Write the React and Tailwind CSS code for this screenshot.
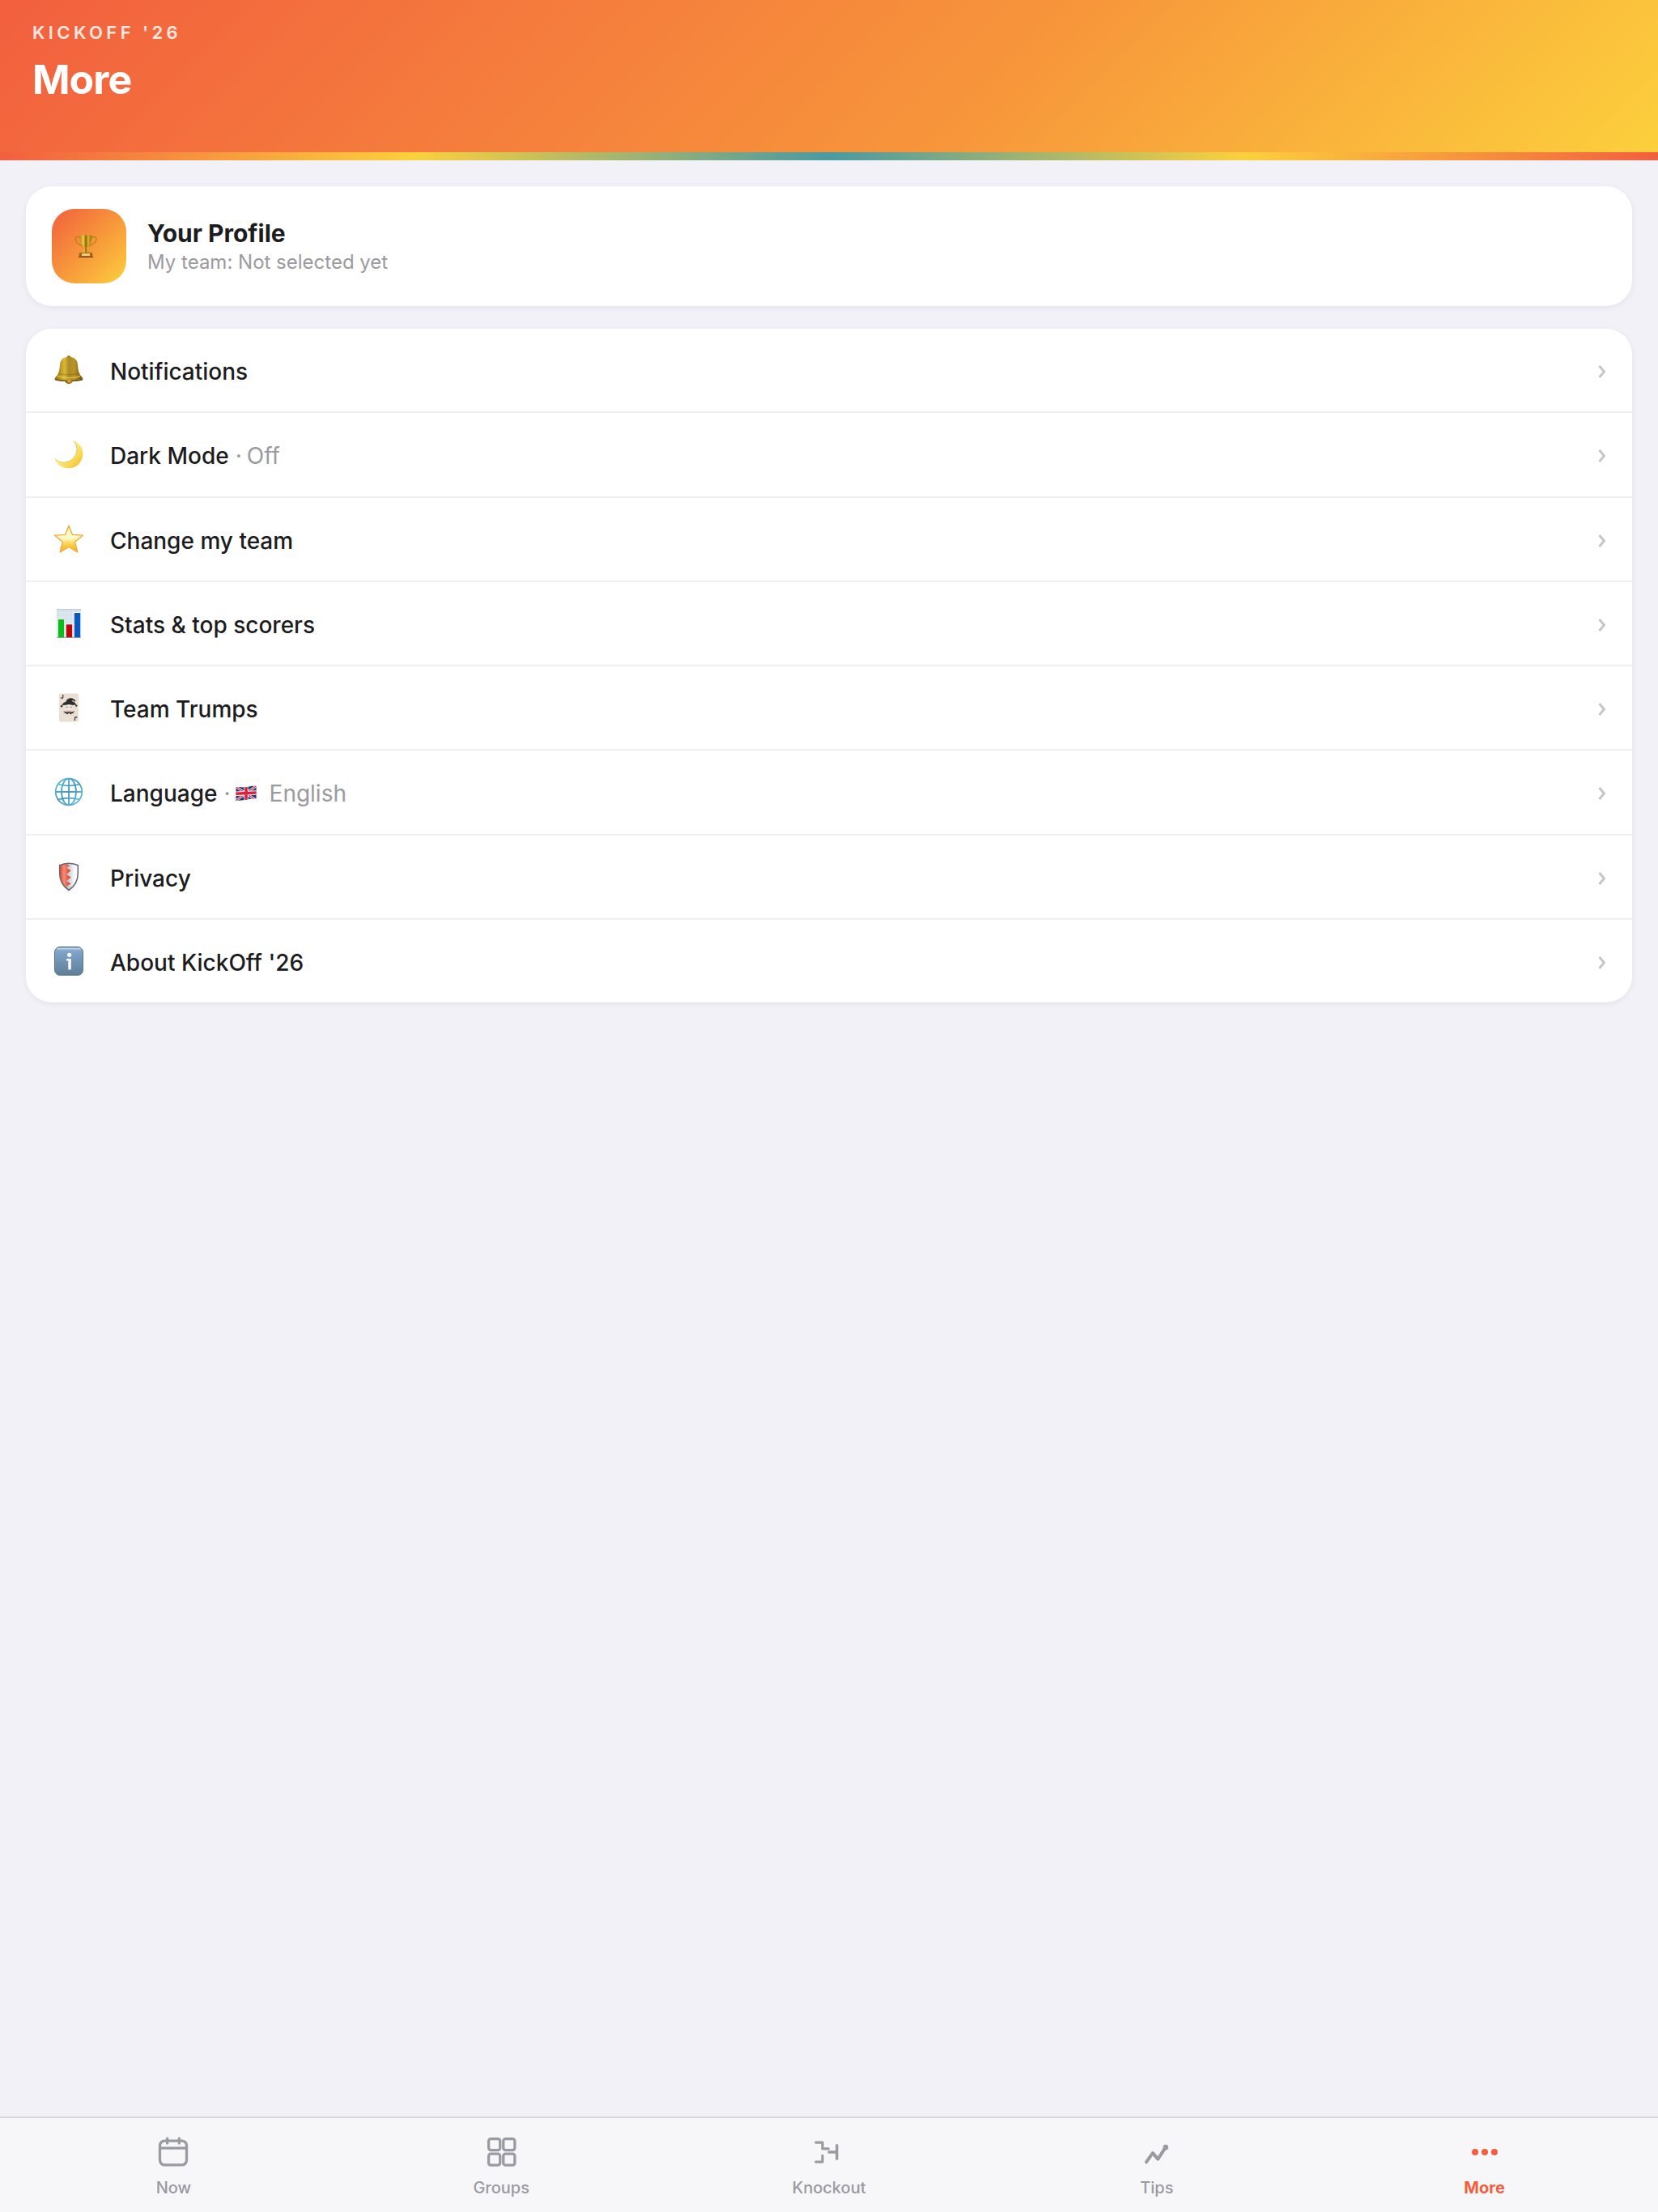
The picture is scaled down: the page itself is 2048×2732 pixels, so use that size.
import React from 'react';

const BellIcon = () => (
    <svg viewBox="0 0 36 36" className="size-9">
        <defs>
            <linearGradient id="bell" x1="0" y1="0" x2="1" y2="0">
                <stop offset="0" stopColor="#8a6a10" />
                <stop offset="0.35" stopColor="#d8b936" />
                <stop offset="0.5" stopColor="#ad8a26" />
                <stop offset="0.7" stopColor="#b8942a" />
                <stop offset="1" stopColor="#6b5012" />
            </linearGradient>
        </defs>
        <ellipse cx="18" cy="31.5" rx="4.6" ry="3.6" fill="#8a5a16" />
        <circle cx="18" cy="2.6" r="2.4" fill="#8f7018" />
        <path d="M18 1.800c-7 0-10.500 3.500-11 9.800-.4 6-1.300 9.500-3 12.500-1.500 2-3.300 3.500-3.500 5.400 4 1.800 10 2.300 17.500 2.300s13.500-.5 17.500-2.300c-.2-1.900-2-3.400-3.500-5.400-1.700-3-2.600-6.500-3-12.500-.5-6.300-4-9.800-11-9.800z" fill="url(#bell)" />
        <path d="M4 25.500c8 3 20 3 28 0" fill="none" stroke="#f0cf3a" strokeWidth="1.600" opacity="0.700" />
        <path d="M5.500 22c7 2.500 18 2.500 25 0" fill="none" stroke="#8a6612" strokeWidth="1" opacity="0.600" />
        <path d="M1 29.800c9 2 25 2 34 0" fill="none" stroke="#60430c" strokeWidth="1.200" />
        <ellipse cx="18.500" cy="31.600" rx="2.800" ry="2.200" fill="#d39a35" />
    </svg>
);

const MoonIcon = () => (
    <svg viewBox="0 0 36 36" className="size-9">
        <defs>
            <linearGradient id="moon" x1="0" y1="0" x2="1" y2="1">
                <stop offset="0.400" stopColor="#fdea92" />
                <stop offset="0.700" stopColor="#fbd850" />
                <stop offset="1" stopColor="#e9b53a" />
            </linearGradient>
        </defs>
        <path d="M23 .8C31 3.500 35.500 10.500 35.300 18 35 28 27.500 35.300 18 35.300 9.500 35.300 2.800 30.500.7 23.500c4 3.700 8.500 5 13.300 4.300C22.500 26.500 28 20 28 12c0-4.300-1.700-8-5-11.200z" fill="url(#moon)" />
        <path d="M1.200 24c4 3.700 8.500 4.800 12.800 4C22.500 26.500 28 20 28 12c0-4-1.500-7.500-4.200-10.500" fill="none" stroke="#e3b23c" strokeWidth="0.700" />
    </svg>
);

const StarIcon = () => (
    <svg viewBox="0 0 36 36" className="size-9">
        <defs>
            <linearGradient id="star" x1="0" y1="0" x2="0" y2="1">
                <stop offset="0" stopColor="#fff3b0" />
                <stop offset="0.450" stopColor="#fffbd0" />
                <stop offset="0.700" stopColor="#fdd24a" />
                <stop offset="1" stopColor="#f8a91c" />
            </linearGradient>
        </defs>
        <path d="M18 1.200l4.500 11.200 12.800.8-9.800 8.200 3.400 12.600L18 27.500 7.100 34l3.400-12.600L.7 13.200l12.800-.8z" fill="url(#star)" stroke="#efa93a" strokeWidth="1.300" strokeLinejoin="round" />
    </svg>
);

const ChartIcon = () => (
    <svg viewBox="0 0 36 36" className="size-9">
        <rect x="3" y="0" width="30" height="36" fill="#d5e1eb" />
        <path d="M3 5h30M3 10h30M3 15h30M3 20h30M3 25h30M8 0v36M13 0v36M18 0v36M23 0v36M28 0v36" stroke="#e6eef5" strokeWidth="0.700" />
        <rect x="3" y="0" width="30" height="1.200" fill="#c0ccd6" />
        <path d="M4 12h9v24H4zM14 18h9v18h-9zM24 4h8.500v32H24z" fill="#fff" />
        <rect x="4.800" y="13" width="7.400" height="22.500" fill="#0cbc1a" />
        <rect x="14.800" y="19.300" width="7.400" height="16.200" fill="#be0509" />
        <rect x="24.800" y="5" width="7.400" height="30.500" fill="#0a58c4" />
        <rect x="3" y="35.200" width="30" height="0.800" fill="#8494ad" />
    </svg>
);

const JokerIcon = () => (
    <svg viewBox="0 0 36 36" className="size-9">
        <rect x="6" y="0.600" width="24" height="35" rx="1.800" fill="#e9dfd3" />
        <path d="M10.800 2v3.200c0 1.500-2.300 1.500-2.500.2" fill="none" stroke="#3b3533" strokeWidth="1.200" />
        <path d="M25.500 34v-3.200c0-1.500 2.300-1.500 2.500-.2" fill="none" stroke="#3b3533" strokeWidth="1.200" />
        <path d="M12.500 14.500l1.500 6.500c1.500 2.500 6.500 2.500 8 0l1.500-6.500z" fill="#f0e6dc" />
        <path d="M9.300 16.300c.2-3 2.200-4.600 5.200-5.500C15 7.500 18 6 21.300 6.300c2.500.3 4 1.700 3.800 3.200-1.300-.8-2.600-.7-3.600.4 3 .6 5.300 2.300 5.700 5.400-1.700-1-3.400-1-5-.3-2.600-1.300-5.600-1.300-8.400 0-1.500-.5-3-.1-4.500 1.300z" fill="#2d2d30" />
        <circle cx="9" cy="16.300" r="1.200" fill="#2d2d30" />
        <circle cx="27.300" cy="15.600" r="1.200" fill="#2d2d30" />
        <circle cx="25" cy="9.400" r="1.100" fill="#2d2d30" />
        <path d="M14.500 17.300h2.500M19.500 17.300h2.500" stroke="#7d8796" strokeWidth="1" />
        <path d="M15.200 20.800c1.800 1.800 4.200 1.800 6 0l-.8 2.800h-4.400z" fill="#e98a7c" />
        <path d="M11 22l4.500 1.500h5.500l4.500-1.500-2.500 2 2 .8-3.500.2-.5 1.500-2.700-1.800-2.700 1.800-.5-1.500-3.600-.2 2-.8z" fill="#2d2d30" />
    </svg>
);

const GlobeIcon = () => (
    <svg viewBox="0 0 36 36" className="size-9">
        <defs>
            <linearGradient id="globe" gradientUnits="userSpaceOnUse" x1="0" y1="0" x2="36" y2="36">
                <stop offset="0" stopColor="#62c4e0" />
                <stop offset="0.500" stopColor="#4298c3" />
                <stop offset="1" stopColor="#6ccbe8" />
            </linearGradient>
        </defs>
        <g fill="none" stroke="url(#globe)" strokeWidth="1.800">
            <circle cx="18" cy="18" r="16.300" />
            <ellipse cx="18" cy="18" rx="9" ry="16.300" />
            <path d="M18 1.600v32.800M1.600 18h32.800" />
            <path d="M4.500 8.500c8 2.300 19 2.300 27 0M4.500 27.500c8-2.300 19-2.300 27 0" />
        </g>
    </svg>
);

const ShieldIcon = () => (
    <svg viewBox="0 0 36 36" className="size-9">
        <defs>
            <linearGradient id="shield-red" x1="0" y1="0" x2="1" y2="0">
                <stop offset="0" stopColor="#e2452f" />
                <stop offset="0.400" stopColor="#fb8a77" />
                <stop offset="1" stopColor="#cc3a21" />
            </linearGradient>
            <linearGradient id="shield-white" x1="0" y1="0" x2="1" y2="0">
                <stop offset="0" stopColor="#9a9ea5" />
                <stop offset="0.500" stopColor="#c9ced5" />
                <stop offset="0.750" stopColor="#f1f4f9" />
                <stop offset="1" stopColor="#fff" />
            </linearGradient>
        </defs>
        <path d="M18 1.200c4 0 8 .8 11.300 2.600v10c0 9-4.300 16-11.300 20.700C11 29.800 6.700 22.800 6.700 13.800v-10C10 2 14 1.200 18 1.200z" fill="url(#shield-white)" />
        <path d="M14.500 1.400C12 1.700 9 2.500 6.700 3.800v10c0 9 4.300 16 11.300 20.700l-3-4.500 5.500-3.800-5.500-3 5.500-4.600-5.500-3.600 5.500-4.800-5.500-3.400 4-2.200z" fill="url(#shield-red)" />
        <path d="M18 1.200c4 0 8 .8 11.300 2.600v10c0 9-4.300 16-11.300 20.700C11 29.800 6.700 22.800 6.700 13.800v-10C10 2 14 1.200 18 1.200z" fill="none" stroke="#6a6a6a" strokeWidth="1.600" />
    </svg>
);

const InfoIcon = () => (
    <svg viewBox="0 0 36 36" className="size-9">
        <defs>
            <linearGradient id="info" x1="0" y1="0" x2="0" y2="1">
                <stop offset="0" stopColor="#8fb0cf" />
                <stop offset="0.250" stopColor="#7ba0c4" />
                <stop offset="1" stopColor="#5f7d98" />
            </linearGradient>
        </defs>
        <rect x="0.500" y="0.500" width="35" height="35" rx="6.500" fill="url(#info)" stroke="#587590" strokeWidth="1" />
        <path d="M4 2.800h28" stroke="#c3d7ea" strokeWidth="1.800" strokeLinecap="round" opacity="0.800" />
        <circle cx="18.700" cy="10.300" r="2.600" fill="#fff" />
        <path d="M15 15.300h5.800v13.200h-3.500V17.500H15z" fill="#fff" />
    </svg>
);

const TrophyIcon = () => (
    <svg viewBox="0 0 28 28" className="size-7">
        <defs>
            <linearGradient id="trophy" x1="0" y1="0" x2="1" y2="0">
                <stop offset="0" stopColor="#b98a14" />
                <stop offset="0.300" stopColor="#f3cf45" />
                <stop offset="0.500" stopColor="#8a6208" />
                <stop offset="0.700" stopColor="#e0b52c" />
                <stop offset="1" stopColor="#946a0c" />
            </linearGradient>
        </defs>
        <path d="M7.500 3C3 1.500.6 3 1 6c.5 3.500 4.500 6 9 8M20.500 3C25 1.500 27.400 3 27 6c-.5 3.500-4.500 6-9 8" fill="none" stroke="#b98414" strokeWidth="1.500" />
        <path d="M6.800.5h14.400c.3 7-1.500 12.500-5.200 14.500h-4C8.300 13 6.500 7.500 6.800.5z" fill="url(#trophy)" />
        <path d="M12.800 15h2.400l.6 4 3 3.500H9.200l3-3.500z" fill="url(#trophy)" />
        <path d="M6 22h16l.6 5H5.400z" fill="#a5661a" />
        <rect x="9" y="23" width="10" height="3" fill="#f0cc7a" />
        <path d="M4.800 27.500h18.400" stroke="#7a3a0c" strokeWidth="1" />
    </svg>
);

const FlagIcon = () => (
    <svg viewBox="0 0 26 20" className="h-5 w-[26px]">
        <defs>
            <clipPath id="flag">
                <path d="M.5 2.500c4-1.300 8 .8 12.500-.2S21.500.5 25.500 1v15.500c-4-.8-8 .2-12.500 1.300S4.500 18.500.5 19z" />
            </clipPath>
        </defs>
        <g clipPath="url(#flag)">
            <rect width="26" height="20" fill="#1c3578" />
            <path d="M0 1.500l26 17M26 .5L0 19" stroke="#f4f1f2" strokeWidth="3" />
            <path d="M0 1.500l26 17M26 .5L0 19" stroke="#d5243f" strokeWidth="1.200" />
            <path d="M13 0v20M0 10.200L26 9" stroke="#f4f1f2" strokeWidth="5.400" />
            <path d="M13 0v20M0 10.200L26 9" stroke="#d5243f" strokeWidth="3.600" />
        </g>
    </svg>
);

const Chevron = () => (
    <svg viewBox="0 0 10 16" className="h-4 w-[10px]" fill="none" stroke="#c5c5c9" strokeWidth="2.800">
        <path d="M1.500 1l6 7-6 7" />
    </svg>
);

const items = [
    { icon: BellIcon, label: 'Notifications' },
    { icon: MoonIcon, label: 'Dark Mode', value: 'Off' },
    { icon: StarIcon, label: 'Change my team' },
    { icon: ChartIcon, label: 'Stats & top scorers' },
    { icon: JokerIcon, label: 'Team Trumps' },
    { icon: GlobeIcon, label: 'Language', value: 'English', flag: true },
    { icon: ShieldIcon, label: 'Privacy' },
    { icon: InfoIcon, label: "About KickOff '26" },
];

const tabs = [
    {
        label: 'Now',
        drawing: (
            <>
                <rect x="3" y="4.400" width="18" height="16.300" rx="3.200" />
                <path d="M3 9.300h18M8 2.800V6M16 2.800V6" />
            </>
        ),
    },
    {
        label: 'Groups',
        drawing: (
            <>
                <rect x="3.600" y="3.100" width="7.700" height="7.600" rx="1.500" />
                <rect x="13.500" y="3.100" width="7.700" height="7.600" rx="1.500" />
                <rect x="3.600" y="13.200" width="7.700" height="7.600" rx="1.500" />
                <rect x="13.500" y="13.200" width="7.700" height="7.600" rx="1.500" />
            </>
        ),
    },
    {
        label: 'Knockout',
        drawing: <path d="M3.200 5.500h4.400v4.300h4M3.200 18.600h4.400v-4.200M12 12h5.300M17.300 7.500v9" />,
    },
    {
        label: 'Tips',
        drawing: (
            <>
                <path d="M4.900 18.800l4.300-6.200 3.500 4.100 5.200-7.900" strokeWidth="2.200" />
                <circle cx="17.900" cy="8.800" r="0.900" />
            </>
        ),
    },
    {
        label: 'More',
        active: true,
        drawing: (
            <g fill="currentColor" stroke="none">
                <circle cx="5.500" cy="12" r="2.200" />
                <circle cx="12" cy="12" r="2.200" />
                <circle cx="18.500" cy="12" r="2.200" />
            </g>
        ),
    },
];

const App = () => {
    return (
        <div className="min-h-screen flex flex-col bg-[#f2f1f7] font-[Inter,sans-serif] text-[#1c1c1e]">
            {/* Header */}
            <header className="bg-[linear-gradient(135deg,#f25f3e_0%,#f7963b_60%,#fcd03c_100%)]">
                <div className="px-10 pt-6 pb-[60px]">
                    <p className="text-[22px] leading-8 font-semibold tracking-[0.2em] text-white/85">KICKOFF '26</p>
                    <h1 className="mt-3 text-[50px] leading-[60px] font-bold tracking-[-1px] text-white">More</h1>
                </div>
                <div className="h-[10px] bg-[linear-gradient(90deg,#f25f3e_0%,#fcd03c_25%,#4a9aa2_50%,#fcd03c_75%,#f25f3e_100%)]"></div>
            </header>

            {/* Main Content */}
            <main className="flex-grow flex flex-col gap-7 p-8">
                <section className="flex items-center gap-[26px] rounded-[32px] bg-white px-8 py-7 shadow-[0_2px_8px_rgba(0,0,0,0.06)]">
                    <div className="flex size-[92px] items-center rounded-[28px] bg-[linear-gradient(135deg,#f25f3e,#f7963b_50%,#fcd03c)] pl-7">
                        <TrophyIcon />
                    </div>
                    <div className="pt-1">
                        <h2 className="text-[30px] leading-9 font-bold">Your Profile</h2>
                        <p className="text-[24px] leading-9 text-[#9a9aa0]">My team: Not selected yet</p>
                    </div>
                </section>

                <ul className="flex min-h-[832px] flex-col divide-y-2 divide-[#efeff1] overflow-hidden rounded-[32px] bg-white shadow-[0_2px_8px_rgba(0,0,0,0.06)]">
                    {items.map(({ icon: Icon, label, value, flag }) => (
                        <li key={label} className="flex flex-1">
                            <button type="button" className="flex flex-1 items-center px-8 text-left text-[28px] leading-9">
                                <span className="mr-[30px] flex w-[42px] justify-center">
                                    <Icon />
                                </span>
                                <span className="flex flex-1 items-center gap-2 pt-1 font-medium">
                                    {label}
                                    {value && (
                                        <span className="flex items-center gap-[6px] font-normal text-[#9a9aa0]">
                                            <span>·</span>
                                            {flag && (
                                                <span className="mr-[10px]">
                                                    <FlagIcon />
                                                </span>
                                            )}
                                            {value}
                                        </span>
                                    )}
                                </span>
                                <span className="pt-1">
                                    <Chevron />
                                </span>
                            </button>
                        </li>
                    ))}
                </ul>
            </main>

            {/* Tab bar */}
            <nav className="flex border-t-2 border-[#d9d8de] bg-[#f7f7f9] px-3 pt-5 pb-[14px]">
                {tabs.map(({ label, active, drawing }) => (
                    <a
                        key={label}
                        href="#"
                        className={`flex flex-1 flex-col items-center gap-[6px] ${active ? 'font-bold text-[#f25f3e]' : 'font-medium text-[#9a9aa2]'}`}
                    >
                        <svg viewBox="0 0 24 24" className="size-11" fill="none" stroke="currentColor" strokeWidth="1.800" strokeLinecap="round" strokeLinejoin="round">
                            {drawing}
                        </svg>
                        <span className="text-[20px] leading-8">{label}</span>
                    </a>
                ))}
            </nav>
        </div>
    );
};

export default App;
